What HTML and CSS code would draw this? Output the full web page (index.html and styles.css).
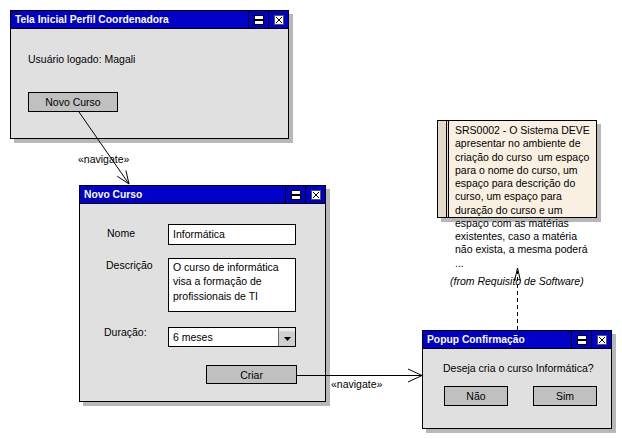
FILE: index.html
```html
<!DOCTYPE html>
<html lang="pt">
<head>
<meta charset="utf-8">
<title>Diagrama de navegação</title>
<link rel="stylesheet" href="styles.css">
</head>
<body>
<div class="canvas">

  <div class="window w-home">
    <div class="titlebar">
      <span class="title">Tela Inicial Perfil Coordenadora</span>
      <span class="tbtn"><svg width="10" height="10" viewBox="0 0 10 10"><rect x="0.5" y="0.5" width="9" height="9" fill="#fff" stroke="#000"/><rect x="1" y="4" width="8" height="2" fill="#000"/></svg></span>
      <span class="tbtn"><svg width="10" height="10" viewBox="0 0 10 10"><rect x="0.5" y="0.5" width="9" height="9" fill="#fff" stroke="#555"/><path d="M2 2L8 8M8 2L2 8" stroke="#000" stroke-width="1"/></svg></span>
    </div>
    <div class="home-body">
      <p class="text">Usuário logado: Magali</p>
      <div class="btn btn-novo">Novo Curso</div>
    </div>
  </div>

  <div class="window w-curso">
    <div class="titlebar">
      <span class="title">Novo Curso</span>
      <span class="tbtn"><svg width="10" height="10" viewBox="0 0 10 10"><rect x="0.5" y="0.5" width="9" height="9" fill="#fff" stroke="#000"/><rect x="1" y="4" width="8" height="2" fill="#000"/></svg></span>
      <span class="tbtn"><svg width="10" height="10" viewBox="0 0 10 10"><rect x="0.5" y="0.5" width="9" height="9" fill="#fff" stroke="#555"/><path d="M2 2L8 8M8 2L2 8" stroke="#000" stroke-width="1"/></svg></span>
    </div>
    <div class="curso-body">
      <div class="row row-nome">
        <span class="label label-nome">Nome</span>
        <div class="field">Informática</div>
      </div>
      <div class="row row-desc">
        <span class="label label-desc">Descrição</span>
        <div class="field area">O curso de informática<br>visa a formação de<br>profissionais de TI</div>
      </div>
      <div class="row row-dur">
        <span class="label label-dur">Duração:</span>
        <div class="field select">
          <span class="select-value">6 meses</span>
          <span class="dropbtn"><svg width="7" height="4" viewBox="0 0 7 4"><path d="M0 0H7L3.5 4Z" fill="#000"/></svg></span>
        </div>
      </div>
      <div class="btn btn-criar">Criar</div>
    </div>
  </div>

  <div class="note">
    <div class="note-stripe"></div>
    <div class="note-text">SRS0002 - O Sistema DEVE<br>apresentar no ambiente de<br>criação do curso &nbsp;um espaço<br>para o nome do curso, um<br>espaço para descrição do<br>curso, um espaço para<br>duração do curso e um<br>espaço com as matérias<br>existentes, caso a matéria<br>não exista, a mesma poderá<br>...</div>
  </div>
  <span class="from-label">(from Requisito de Software)</span>

  <div class="window w-popup">
    <div class="titlebar">
      <span class="title">Popup Confirmação</span>
      <span class="tbtn"><svg width="10" height="10" viewBox="0 0 10 10"><rect x="0.5" y="0.5" width="9" height="9" fill="#fff" stroke="#000"/><rect x="1" y="4" width="8" height="2" fill="#000"/></svg></span>
      <span class="tbtn"><svg width="10" height="10" viewBox="0 0 10 10"><rect x="0.5" y="0.5" width="9" height="9" fill="#fff" stroke="#555"/><path d="M2 2L8 8M8 2L2 8" stroke="#000" stroke-width="1"/></svg></span>
    </div>
    <div class="popup-body">
      <p class="text popup-msg">Deseja cria o curso Informática?</p>
      <div class="popup-actions">
        <div class="btn btn-popup">Não</div>
        <div class="btn btn-popup">Sim</div>
      </div>
    </div>
  </div>

  <span class="nav-label nav-1">«navigate»</span>
  <span class="nav-label nav-2">«navigate»</span>

  <svg class="wires" width="622" height="439" viewBox="0 0 622 439">
    <g stroke="#000" stroke-width="1" fill="none">
      <line x1="79" y1="112" x2="129" y2="184"/>
      <polyline points="117.3,176.3 129,184 125.9,170.4"/>
      <line x1="296" y1="375.5" x2="422" y2="375.5"/>
      <polyline points="408,369 422,375.5 408,382"/>
      <line x1="517.5" y1="330" x2="517.5" y2="271" stroke-dasharray="4 3"/>
      <polyline points="514.5,281 517.5,268 520.5,281"/>
    </g>
  </svg>
</div>
</body>
</html>
```

FILE: styles.css
```css
* {
  box-sizing: border-box;
  margin: 0;
  padding: 0;
}

body {
  margin: 0;
  background: #fff;
  font-family: "Liberation Sans", Arial, sans-serif;
  font-size: 10.5px;
  color: #000;
}

.canvas {
  position: relative;
  width: 622px;
  height: 439px;
  overflow: hidden;
}

/* ---------- windows ---------- */
.window {
  position: absolute;
  display: flex;
  flex-direction: column;
  border: 1px solid #000;
  background: #e0e0e0;
  box-shadow: 4px 4px 0 #b8b8b8;
}

.titlebar {
  display: flex;
  flex: none;
  height: 18px;
  background: #0000c8;
  border-bottom: 1px solid #000;
  color: #fff;
  font-weight: bold;
  font-size: 10.3px;
}

.title {
  flex: 1;
  padding-left: 4px;
  line-height: 17px;
  white-space: nowrap;
  overflow: hidden;
}

.tbtn {
  flex: none;
  width: 20px;
  border-left: 1px solid #000;
  display: flex;
  align-items: center;
  justify-content: center;
}

.tbtn svg {
  display: block;
}

.text {
  line-height: 13px;
  white-space: nowrap;
}

.btn {
  display: flex;
  align-items: center;
  justify-content: center;
  background: #c0c0c0;
  border: 1px solid #000;
}

/* home window */
.w-home {
  left: 10px;
  top: 10px;
  width: 279px;
  height: 129px;
}

.home-body {
  padding: 24px 0 0 17px;
}

.btn-novo {
  margin-top: 26px;
  width: 90px;
  height: 20px;
}

/* novo curso window */
.w-curso {
  left: 79px;
  top: 185px;
  width: 247px;
  height: 217px;
}

.curso-body {
  display: flex;
  flex-direction: column;
  padding: 20px 0 0 26px;
}

.row {
  display: flex;
  align-items: flex-start;
}

.label {
  width: 62px;
  flex: none;
  line-height: 13px;
  white-space: nowrap;
}

.label-nome {
  padding-left: 1px;
  margin-top: 3px;
}

.label-desc {
  margin-top: 1px;
}

.label-dur {
  margin-left: -2px;
  margin-right: 2px;
  margin-top: -1px;
}

.field {
  width: 128px;
  height: 21px;
  background: #fff;
  border: 1px solid #000;
  padding: 0 4px;
  line-height: 19px;
  white-space: nowrap;
}

.row-desc {
  margin-top: 13px;
}

.field.area {
  height: 54px;
  padding-top: 1px;
  line-height: 14.3px;
}

.row-dur {
  margin-top: 15px;
}

.field.select {
  display: flex;
  height: 20px;
  padding: 0 0 0 4px;
  line-height: 18px;
}

.select-value {
  flex: 1;
}

.dropbtn {
  flex: none;
  width: 17px;
  display: flex;
  align-items: flex-end;
  justify-content: center;
  padding-bottom: 5px;
  background: linear-gradient(#ececec 0 3px, #d8d8d8 3px 4px, #cfcfcf 4px);
  border-left: 1px solid #6a6a6a;
}

.btn-criar {
  margin-top: 18px;
  margin-left: 100px;
  width: 91px;
  height: 19px;
}

/* popup window */
.w-popup {
  left: 422px;
  top: 330px;
  width: 190px;
  height: 99px;
}

.popup-body {
  padding: 13px 0 0 20px;
}

.popup-actions {
  display: flex;
  gap: 25px;
  margin-top: 11px;
  padding-left: 1px;
}

.btn-popup {
  width: 64px;
  height: 20px;
}

/* note */
.note {
  position: absolute;
  left: 437px;
  top: 120px;
  width: 160px;
  height: 98px;
  display: flex;
  border: 1px solid #000;
  background: #f9f0e2;
  box-shadow: 4px 4px 0 #b8b8b8;
}

.note-stripe {
  flex: none;
  width: 11px;
  background: linear-gradient(to right, #e2d9c9 0 8px, #000 8px 9px, #e2d9c9 9px 10px, #000 10px 11px);
}

.note-text {
  padding: 3px 0 0 6px;
  line-height: 13.25px;
  white-space: nowrap;
}

.from-label {
  position: absolute;
  left: 450px;
  top: 275px;
  font-style: italic;
  line-height: 13px;
  white-space: nowrap;
}

.nav-label {
  position: absolute;
  line-height: 13px;
  white-space: nowrap;
}

.nav-1 {
  left: 78px;
  top: 153px;
}

.nav-2 {
  left: 331px;
  top: 378px;
}

.wires {
  position: absolute;
  left: 0;
  top: 0;
  pointer-events: none;
}
```
